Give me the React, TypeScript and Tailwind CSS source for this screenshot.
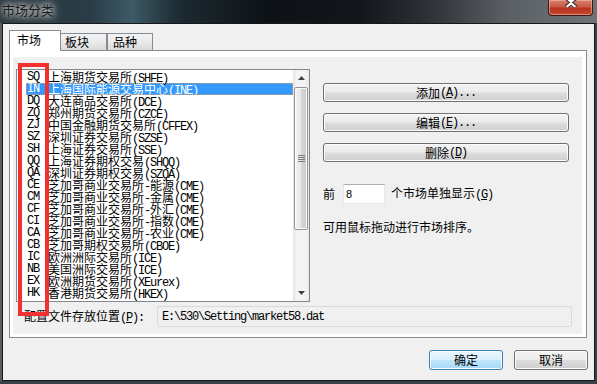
import React from "react";

const MONO = "font-['Liberation_Mono',monospace] tracking-[-1.2px]";

function Mix({ s }: { s: string }) {
  const parts = s.split(/([\x20-\x7e]+)/).filter((p) => p.length > 0);
  return (
    <>
      {parts.map((p, i) =>
        /^[\x20-\x7e]+$/.test(p) ? (
          <span key={i} className={MONO}>
            {p}
          </span>
        ) : (
          <span key={i}>{p}</span>
        )
      )}
    </>
  );
}

function Acc({ pre, k, post }: { pre: string; k: string; post: string }) {
  return (
    <>
      <span>{pre}</span>
      <span className={MONO}>
        (<span className="underline underline-offset-1">{k}</span>){post}
      </span>
    </>
  );
}

const rows: [string, string][] = [
  ["SQ", "上海期货交易所(SHFE)"],
  ["IN", "上海国际能源交易中心(INE)"],
  ["DQ", "大连商品交易所(DCE)"],
  ["ZQ", "郑州期货交易所(CZCE)"],
  ["ZJ", "中国金融期货交易所(CFFEX)"],
  ["SZ", "深圳证券交易所(SZSE)"],
  ["SH", "上海证券交易所(SSE)"],
  ["QQ", "上海证券期权交易(SHQQ)"],
  ["QA", "深圳证券期权交易(SZQA)"],
  ["CE", "芝加哥商业交易所-能源(CME)"],
  ["CM", "芝加哥商业交易所-金属(CME)"],
  ["CF", "芝加哥商业交易所-外汇(CME)"],
  ["CI", "芝加哥商业交易所-指数(CME)"],
  ["CA", "芝加哥商业交易所-农业(CME)"],
  ["CB", "芝加哥期权交易所(CBOE)"],
  ["IC", "欧洲洲际交易所(ICE)"],
  ["NB", "美国洲际交易所(ICE)"],
  ["EX", "欧洲期货交易所(XEurex)"],
  ["HK", "香港期货交易所(HKEX)"],
];

function Btn({ children, className }: { children: React.ReactNode; className: string }) {
  return (
    <div
      className={
        "flex items-center justify-center rounded-[3px] border border-[#707070] bg-[linear-gradient(180deg,#f2f2f2_0%,#ebebeb_48%,#dddddd_52%,#cfcfcf_100%)] shadow-[inset_0_0_0_1px_#fbfbfb] " +
        className
      }
    >
      {children}
    </div>
  );
}

function Scrollbar() {
  return (
    <div className="w-[16px] h-full flex flex-col bg-[linear-gradient(90deg,#e4e4e4_0%,#f4f4f4_25%,#f4f4f4_75%,#e9e9e9_100%)]">
      <div className="h-[16px] flex items-center justify-center">
        <svg width="7" height="4" viewBox="0 0 7 4">
          <path d="M0 4 L3.5 0 L7 4 Z" fill="#404040" />
        </svg>
      </div>
      <div className="mt-[1px] h-[143px] mx-[1px] rounded-[2px] border border-[#959595] bg-[linear-gradient(90deg,#f4f4f4_0%,#e8e8e8_45%,#d6d6d6_55%,#cacaca_100%)] shadow-[inset_0_0_0_1px_#fbfbfb] flex flex-col items-center justify-center gap-[1px]">
        <div className="w-[7px] h-[1px] bg-[#7a7a7a]" />
        <div className="w-[7px] h-[1px] bg-[#7a7a7a]" />
        <div className="w-[7px] h-[1px] bg-[#7a7a7a]" />
        <div className="w-[7px] h-[1px] bg-[#7a7a7a]" />
      </div>
      <div className="flex-1" />
      <div className="h-[16px] flex items-center justify-center">
        <svg width="7" height="4" viewBox="0 0 7 4">
          <path d="M0 0 L3.5 4 L7 0 Z" fill="#404040" />
        </svg>
      </div>
    </div>
  );
}

export default function App() {
  return (
    <div className="w-[597px] h-[384px] overflow-hidden relative flex flex-col bg-[#3d4449] font-['Noto_Sans_CJK_SC',sans-serif] text-[12px] leading-[12px] text-black">
      {/* title bar */}
      <div className="h-[23px] flex items-start bg-[linear-gradient(90deg,#2f3a40_0%,#2a3c46_15%,#3c5a66_22%,#1d2a31_30%,#0d1216_45%,#12161a_60%,#2e3236_72%,#5b6064_85%,#6e7377_100%)]">
        <div className="ml-[2px] mt-[3px] text-[13px] leading-[14px] text-[#1b1b1b] [text-shadow:0_0_6px_#ffffff,0_0_10px_rgba(255,255,255,0.85)]">
          市场分类
        </div>
        <div className="ml-auto mr-[4px] w-[45px] h-[16px] rounded-b-[4px] border border-t-0 border-[#3a1a14] bg-[linear-gradient(180deg,#d9806d_0%,#c85a45_45%,#b8321e_55%,#c84a32_100%)] shadow-[inset_0_0_0_1px_rgba(255,200,180,0.5)] flex justify-center">
          <svg width="14" height="10" viewBox="0 0 14 10" className="-mt-[2px]">
            <path d="M2 0 L7 4 L12 0 M2 9 L7 5 L12 9" stroke="#3a2a28" strokeWidth="4" fill="none" />
            <path d="M2.5 0 L7 3.8 L11.5 0 M2.5 9 L7 5.2 L11.5 9" stroke="#ffffff" strokeWidth="2.2" fill="none" />
          </svg>
        </div>
      </div>

      <div className="h-[358px] flex">
        <div className="w-[2px] bg-[#5a5f63]" />
        <div className="w-[593px] border border-[#14181b] bg-[#f0f0f0] flex flex-col">
          {/* tabs */}
          <div className="ml-[6px] mt-[6px] flex items-end h-[20px]">
            <div className="relative z-10 w-[52px] h-[21px] -mb-px bg-white border border-b-0 border-[#898c95] pl-[7px] pt-[3px]">
              市场
            </div>
            <div className="w-[46px] h-[17px] border border-b-0 border-l-0 border-[#898c95] bg-[linear-gradient(180deg,#f3f3f3_0%,#ebebeb_50%,#d9d9d9_100%)] pl-[4px] pt-[2px]">
              板块
            </div>
            <div className="w-[46px] h-[17px] border border-b-0 border-[#898c95] bg-[linear-gradient(180deg,#f3f3f3_0%,#ebebeb_50%,#d9d9d9_100%)] pl-[5px] pt-[2px]">
              品种
            </div>
          </div>

          {/* panel */}
          <div className="ml-[6px] w-[578px] h-[288px] border border-[#898c95] bg-white pl-[3px] pt-[6px] pr-[4px] pb-[3px] flex">
            <div className="flex-1 bg-[#f0f0f0] flex flex-col">
              <div className="flex pl-[3px] pt-[12px]">
                {/* list box */}
                <div className="w-[294px] h-[233px] border border-[#828790] bg-white flex">
                  <div className="flex-1 pl-[9px] pt-[1px] overflow-hidden">
                    {rows.map(([c, n], i) => (
                      <div
                        key={c}
                        className={
                          i === 1
                            ? "h-[12px] leading-[12px] whitespace-nowrap flex bg-[#3399ff] text-white outline-1 outline-dotted outline-[#d0a060] -outline-offset-1"
                            : "h-[12px] leading-[12px] whitespace-nowrap flex"
                        }
                      >
                        <span className={"w-[22px] pl-[1px] " + MONO}>{c}</span>
                        <span>
                          <Mix s={n} />
                        </span>
                      </div>
                    ))}
                  </div>
                  <Scrollbar />
                </div>

                {/* right column */}
                <div className="ml-[13px] pt-[14px] flex flex-col">
                  <Btn className="w-[246px] h-[19px]">
                    <Acc pre="添加" k="A" post="..." />
                  </Btn>
                  <Btn className="w-[246px] h-[19px] mt-[11px]">
                    <Acc pre="编辑" k="E" post="..." />
                  </Btn>
                  <Btn className="w-[246px] h-[19px] mt-[11px]">
                    <Acc pre="删除" k="D" post="" />
                  </Btn>
                  <div className="mt-[22px] h-[20px] flex items-center">
                    <span className="w-[12px]">前</span>
                    <div className="ml-[8px] w-[42px] h-[20px] bg-white border border-[#e3e9ef] border-t-[#abadb3] pl-[2px] flex items-center">
                      <span className="font-['Liberation_Sans',sans-serif] text-[11px]">8</span>
                    </div>
                    <span className="ml-[6px]">
                      <Acc pre="个市场单独显示" k="G" post="" />
                    </span>
                  </div>
                  <div className="mt-[17px]">可用鼠标拖动进行市场排序。</div>
                </div>
              </div>

              {/* path row */}
              <div className="flex items-center mt-[4px] h-[21px]">
                <div className="ml-[11px] w-[133px]">
                  <Acc pre="配置文件存放位置" k="P" post=":" />
                </div>
                <div className="w-[415px] h-[21px] rounded-[2px] border border-[#d9d9d9] bg-[#f0f0f0] pl-[4px] flex items-center">
                  <span className={MONO}>{"E:\\530\\Setting\\market58.dat"}</span>
                </div>
              </div>
            </div>
          </div>

          {/* bottom buttons */}
          <div className="mt-[12px] flex justify-end mr-[6px] gap-[11px]">
            <div className="w-[74px] h-[20px] flex items-center justify-center rounded-[3px] border border-[#3c7fb1] bg-[linear-gradient(180deg,#eaf6fd_0%,#d9f0fc_48%,#bee6fd_52%,#a7d9f5_100%)] shadow-[inset_0_0_0_1px_#f2fbff]">
              确定
            </div>
            <Btn className="w-[74px] h-[20px]">取消</Btn>
          </div>
        </div>
        <div className="w-[2px] bg-[#3a4448]" />
      </div>
      <div className="h-[3px] bg-[#3a4146]" />

      {/* red annotation box */}
      <div className="absolute left-[18px] top-[63px] w-[31px] h-[253px] border-[4px] border-[#f2302f]" />
    </div>
  );
}
